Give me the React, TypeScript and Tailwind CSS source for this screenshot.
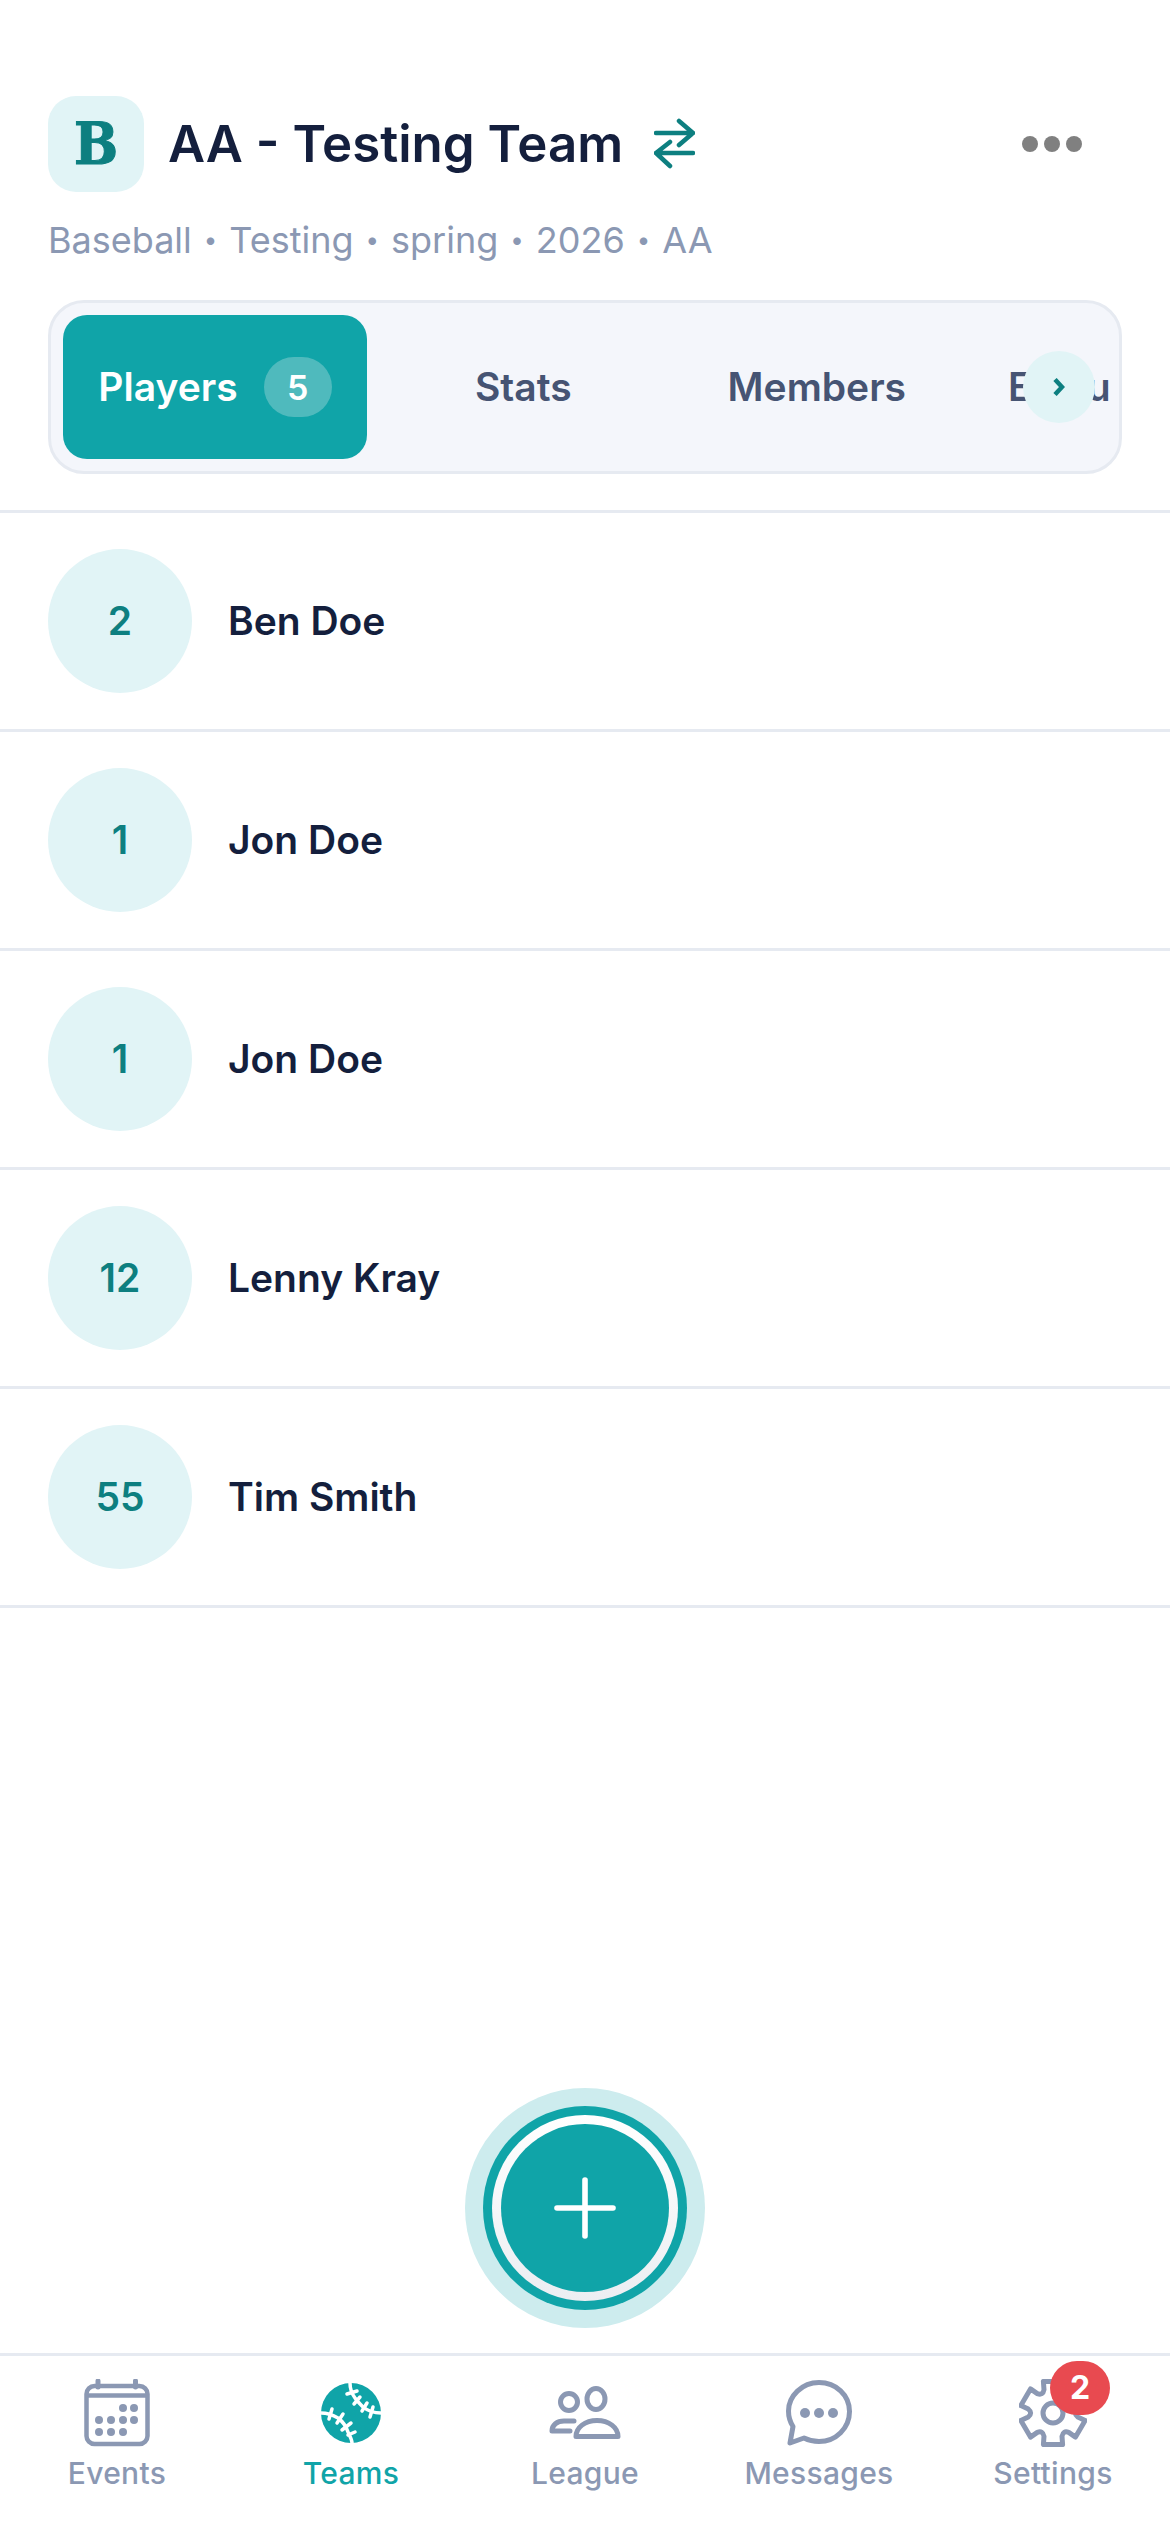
import { Plus } from "lucide-react";

const players = [
  { number: "2", name: "Ben Doe" },
  { number: "1", name: "Jon Doe" },
  { number: "1", name: "Jon Doe" },
  { number: "12", name: "Lenny Kray" },
  { number: "55", name: "Tim Smith" },
];

const meta = ["Baseball", "Testing", "spring", "2026", "AA"];

function SwapIcon() {
  return (
    <svg width="41" height="52" viewBox="0 0 41 52" fill="none" stroke="#0d7f80" strokeWidth="4.5" strokeLinecap="round" strokeLinejoin="round">
      <path d="M2 15h37M25 3l14 12-14 12" />
      <path d="M39 35H2M16 24L2 35l14 13" />
    </svg>
  );
}

function CalendarIcon() {
  const dots = [
    [39, 29], [50, 29],
    [15, 41], [27, 41], [39, 41], [50, 41],
    [15, 53], [27, 53], [39, 53],
  ];
  return (
    <svg width="66" height="68" viewBox="0 0 66 68" fill="none" stroke="#8b98b3" strokeWidth="4.5">
      <rect x="2.500" y="7" width="61" height="58" rx="8" />
      <path d="M3 16.500h60" />
      <path d="M14 2v6M51.500 2v6" strokeLinecap="round" strokeWidth="5" />
      {dots.map(([x, y]) => (
        <circle key={`${x}-${y}`} cx={x} cy={y} r="4" fill="#8b98b3" stroke="none" />
      ))}
    </svg>
  );
}

function BallIcon() {
  return (
    <svg width="60" height="60" viewBox="0 0 60 60">
      <circle cx="30" cy="30" r="30" fill="#10a4a8" />
      <g fill="none" stroke="#fff" strokeWidth="3.500" strokeLinecap="round">
        <path d="M29 0c0 6 2 11 5 15 2 3 5 6 8 9 5 4 11 6 18 6" />
        <path d="M0 30c6 0 12 2 17 5 4 3 8 8 10 14 1 3 4 7 4 11" />
        <path d="M26 11l10-3M33 21l6-7M41 28l5-8M49 34l3-10" />
        <path d="M8 36l3-10M16 40l6-9M21 47l9-7M27 52l7-3" />
      </g>
    </svg>
  );
}

function LeagueIcon() {
  return (
    <svg width="72" height="56" viewBox="0 0 72 56" fill="none" stroke="#8b98b3" strokeWidth="5" strokeLinecap="round" strokeLinejoin="round">
      <circle cx="20" cy="17" r="8.500" />
      <ellipse cx="47" cy="14" rx="9" ry="10.500" />
      <path d="M25 36H15C8 36 3 40 3 46h18" />
      <path d="M27 51.500c0-9 9-16 21-16s21 7 21 16z" />
    </svg>
  );
}

function MessageIcon() {
  return (
    <svg width="66" height="66" viewBox="0 0 66 66" fill="none" stroke="#8b98b3" strokeWidth="5" strokeLinejoin="round">
      <path d="M33 2.500C16 2.500 2.500 16 2.500 31c0 6 1.600 11 4.500 15.500L4 63l14-5c4 2 10 3.500 15 3.500 17 0 30.500-13.500 30.500-30S50 2.500 33 2.500z" />
      <circle cx="19" cy="33" r="5" fill="#8b98b3" stroke="none" />
      <circle cx="33" cy="33" r="5" fill="#8b98b3" stroke="none" />
      <circle cx="47" cy="33" r="5" fill="#8b98b3" stroke="none" />
    </svg>
  );
}

// six flat teeth joined by rounded valleys
function gearPath() {
  const c = 34;
  const pt = (r: number, deg: number) => {
    const a = (deg * Math.PI) / 180;
    return `${(c + r * Math.cos(a)).toFixed(1)} ${(c + r * Math.sin(a)).toFixed(1)}`;
  };
  let d = "";
  for (let k = 0; k < 6; k++) {
    const t = k * 60 - 90;
    d += `${k === 0 ? "M" : "L"}${pt(25, t - 21)}L${pt(33, t - 17)}L${pt(33, t + 17)}L${pt(25, t + 21)}Q${pt(20, t + 30)} ${pt(25, t + 39)}`;
  }
  return d + "Z";
}

function GearIcon() {
  return (
    <svg width="68" height="68" viewBox="0 0 68 68" fill="none" stroke="#8b98b3" strokeWidth="5" strokeLinejoin="round">
      <path d={gearPath()} />
      <circle cx="34" cy="34" r="10" />
    </svg>
  );
}

function NavItem({ label, active, icon, badge }: { label: string; active?: boolean; icon: React.ReactNode; badge?: string }) {
  return (
    <div className="relative flex flex-col items-center">
      <div className="flex h-[70px] items-center justify-center">{icon}</div>
      <span className={`mt-[7px] text-[30px] leading-[36px] font-medium tracking-[0.3px] ${active ? "text-[#10a4a8]" : "text-[#8b98b3]"}`}>{label}</span>
      {badge && (
        <span className="absolute top-[-17px] left-[114px] flex h-[54px] w-[60px] items-center justify-center rounded-full bg-[#e84a50] text-[32px] font-bold text-white">
          {badge}
        </span>
      )}
    </div>
  );
}

export default function App() {
  return (
    <div className="flex h-[2532px] w-[1170px] flex-col overflow-hidden bg-white font-['Inter',sans-serif]">
      <div className="flex items-center pt-[96px] pr-[88px] pl-[48px]">
        <div className="flex h-[96px] w-[96px] items-center justify-center rounded-[28px] bg-[#e1f4f6] font-['DejaVu_Serif_Condensed','DejaVu_Serif',serif] text-[58px] font-bold text-[#0d7f80] [-webkit-text-stroke:1px_#0d7f80]">
          B
        </div>
        <h1 className="ml-[24px] text-[51px] font-semibold text-[#141f3d]">AA - Testing Team</h1>
        <div className="ml-[31px] flex">
          <SwapIcon />
        </div>
        <div className="ml-auto flex gap-[6px]">
          <span className="h-[16px] w-[16px] rounded-full bg-[#808080]" />
          <span className="h-[16px] w-[16px] rounded-full bg-[#808080]" />
          <span className="h-[16px] w-[16px] rounded-full bg-[#808080]" />
        </div>
      </div>

      <div className="mt-[24px] flex h-[48px] items-center gap-[12px] pl-[48px] text-[36px] text-[#8b98b3]">
        {meta.map((m, i) => (
          <div key={m} className="flex items-center gap-[12px]">
            {i > 0 && <span className="text-[24px]">•</span>}
            <span>{m}</span>
          </div>
        ))}
      </div>

      <div className="relative mx-[48px] mt-[36px] h-[174px] rounded-[36px] border-[3px] border-[#e6eaf1] bg-[#f4f6fb] pl-[12px]">
        <div className="mr-[10px] flex h-full items-center overflow-hidden">
          <div className="flex h-[144px] w-[304px] shrink-0 items-center justify-center gap-[26px] rounded-[24px] bg-[#10a4a8]">
            <span className="text-[39px] font-semibold text-white">Players</span>
            <span className="flex h-[60px] w-[68px] items-center justify-center rounded-full bg-[#4fbabd] text-[34px] font-semibold text-white">5</span>
          </div>
          <span className="ml-[108px] text-[39px] font-semibold text-[#465473]">Stats</span>
          <span className="ml-[156px] text-[39px] font-semibold text-[#465473]">Members</span>
          <span className="ml-[102px] text-[39px] font-semibold whitespace-nowrap text-[#465473]">Evaluations</span>
        </div>
        <div className="absolute top-[48px] left-[972px] flex h-[72px] w-[72px] items-center justify-center rounded-full bg-[#e1f4f6]">
          <svg width="12" height="18" viewBox="0 0 12 18" fill="none" stroke="#0d7f80" strokeWidth="4.500">
            <path d="M2 1.500l7 7.500-7 7.500" />
          </svg>
        </div>
      </div>

      <div className="mt-[36px] border-t-[3px] border-[#e6eaf1]">
        {players.map((p, i) => (
          <div key={i} className="flex h-[219px] items-center border-b-[3px] border-[#e6eaf1] pl-[48px]">
            <div className="flex h-[144px] w-[144px] items-center justify-center rounded-full bg-[#e1f4f6] text-[39px] font-semibold text-[#0d7f80]">
              {p.number}
            </div>
            <span className="ml-[36px] text-[39px] font-semibold text-[#141f3d]">{p.name}</span>
          </div>
        ))}
      </div>

      <div className="flex flex-1 items-end justify-center pb-[25px]">
        <div className="flex h-[240px] w-[240px] items-center justify-center rounded-full bg-[#cdecee]">
          <div className="flex h-[204px] w-[204px] items-center justify-center rounded-full bg-[#10a4a8]">
            <div className="flex h-[186px] w-[186px] items-center justify-center rounded-full bg-linear-to-b from-white to-[#eceef2]">
              <div className="flex h-[168px] w-[168px] items-center justify-center rounded-full bg-[#10a4a8]">
                <Plus size={96} color="#fff" strokeWidth={1.4} />
              </div>
            </div>
          </div>
        </div>
      </div>

      <div className="grid h-[179px] grid-cols-5 border-t-[3px] border-[#e6eaf1] pt-[22px]">
        <NavItem label="Events" icon={<CalendarIcon />} />
        <NavItem label="Teams" active icon={<BallIcon />} />
        <NavItem label="League" icon={<LeagueIcon />} />
        <NavItem label="Messages" icon={<MessageIcon />} />
        <NavItem label="Settings" icon={<GearIcon />} badge="2" />
      </div>
    </div>
  );
}
